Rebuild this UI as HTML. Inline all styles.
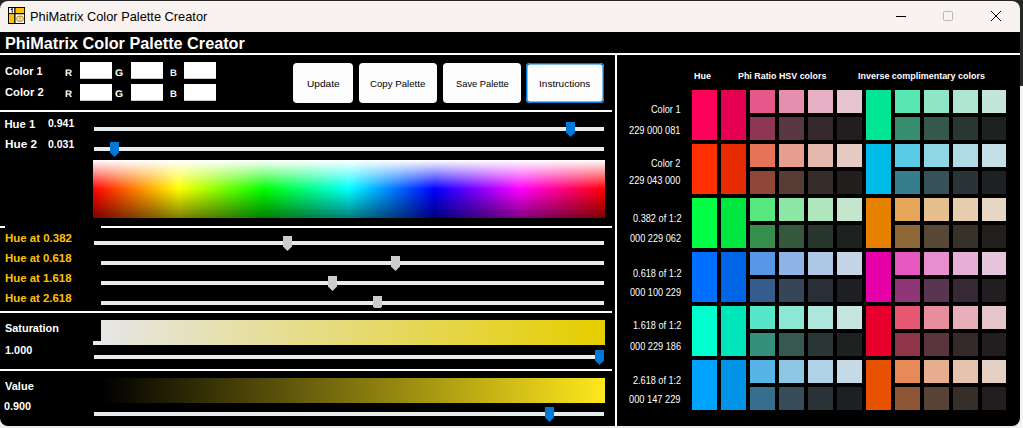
<!DOCTYPE html>
<html><head><meta charset="utf-8"><title>PhiMatrix Color Palette Creator</title>
<style>
html,body{margin:0;padding:0;}
body{width:1023px;height:428px;overflow:hidden;background:#f0f0f0;font-family:"Liberation Sans",sans-serif;position:relative;}
#out{position:absolute;left:0;top:0;width:1023px;height:428px;background:#ececec;overflow:hidden;}
#outtop{position:absolute;left:0;top:0;width:1023px;height:12px;background:#262626;}
#outright{position:absolute;left:1018px;top:0;width:5px;height:86px;background:#262626;}
#outright2{position:absolute;left:1018px;top:86px;width:5px;height:342px;background:#f4f4f4;}
#win{position:absolute;left:0;top:1px;width:1020px;height:425px;background:#000;border-radius:8px;overflow:hidden;}
#tb{position:absolute;left:0;top:0;width:1020px;height:31px;background:#f8f2f0;}
.a{position:absolute;}
.w{position:absolute;background:#fff;}
.inp{position:absolute;width:32px;height:17px;background:#fff;box-shadow:inset 0 -1px 0 #c8c8c8;}
.btn{position:absolute;top:62px;height:40px;background:#fdfdfd;border-radius:4px;}
.trk{position:absolute;height:4px;background:#e8ebec;}
.th{position:absolute;width:9px;height:15px;}
.c{position:absolute;width:25px;}
#txt{position:absolute;left:0;top:0;width:1023px;height:428px;overflow:hidden;}
.gp{text-rendering:geometricPrecision;}
.x{position:absolute;white-space:nowrap;line-height:1.2;transform-origin:0 0;}
</style></head><body>
<div id="out"><div id="outtop"></div><div id="outright"></div><div id="outright2"></div></div>
<div id="win">
<div id="tb">
<svg class="a" style="left:8px;top:6px" width="17" height="17" viewBox="0 0 17 17"><rect x="0" y="0" width="17" height="17" fill="#000"/><rect x="1" y="1" width="5.2" height="5.1" fill="#fff"/><rect x="7.5" y="1" width="8.6" height="5.1" fill="#ffc400"/><rect x="1" y="7.1" width="5.2" height="8.9" fill="#ffc400"/><rect x="7.5" y="7.3" width="8.6" height="8.7" fill="#fff"/><ellipse cx="12" cy="11.8" rx="3.3" ry="2.7" fill="#f6edc4" stroke="#c4a02c" stroke-width="1.1"/><path d="M12 9.2V14.4" stroke="#c4a02c" stroke-width="0.9"/><path d="M2.7 2.6L4.2 1.8V5.8" stroke="#333" stroke-width="1.2" fill="none"/></svg>
<svg class="a" style="left:890px;top:5px" width="120" height="22" viewBox="0 0 120 22"><path d="M6 10.5H16" stroke="#000" stroke-width="1.1"/><rect x="53.5" y="5.5" width="9" height="9" rx="1" fill="none" stroke="#bcb8b6" stroke-width="1"/><path d="M101 5L111 15M111 5L101 15" stroke="#000" stroke-width="1"/></svg>
</div>
<div class="w" style="left:0;top:52px;width:1020px;height:2px"></div>

<div class="inp" style="left:80px;top:61px"></div><div class="inp" style="left:131px;top:61px"></div><div class="inp" style="left:184px;top:61px"></div>
<div class="inp" style="left:80px;top:83px"></div><div class="inp" style="left:131px;top:83px"></div><div class="inp" style="left:184px;top:83px"></div>

<div class="btn" style="left:293px;width:60px"></div>
<div class="btn" style="left:359px;width:78px"></div>
<div class="btn" style="left:443px;width:78px"></div>
<div class="btn" style="left:526px;width:78px"></div><svg class="a" style="left:526px;top:62px" width="78" height="40" viewBox="0 0 78 40"><rect x="0.75" y="0.75" width="76.5" height="38.5" rx="3.5" fill="none" stroke="#0078d7" stroke-width="1.5"/></svg>

<div class="w" style="left:0;top:109px;width:612px;height:2px"></div>
<div class="w" style="left:615px;top:54px;width:2px;height:371px"></div>

<div class="trk" style="left:94px;top:126px;width:510px"></div>
<div class="trk" style="left:94px;top:146px;width:510px"></div>
<svg class="th" style="left:566px;top:121px" viewBox="0 0 9 15"><path d="M0 0H9V10.5L4.5 15L0 10.5Z" fill="#0078d7"/></svg>
<svg class="th" style="left:110px;top:141px" viewBox="0 0 9 15"><path d="M0 0H9V10.5L4.5 15L0 10.5Z" fill="#0078d7"/></svg>

<div class="a" style="left:93px;top:159px;width:512px;height:58px;background:linear-gradient(to bottom,rgba(255,255,255,1) 0%,rgba(255,255,255,0) 50%,rgba(0,0,0,0) 50%,rgba(0,0,0,0.5) 100%),linear-gradient(to right,#f00 0%,#ff0 16.667%,#0f0 33.333%,#0ff 50%,#00f 66.667%,#f0f 83.333%,#f00 100%)"></div>

<div class="w" style="left:0;top:225px;width:5px;height:2px"></div>
<div class="w" style="left:101px;top:225px;width:511px;height:2px"></div>

<div class="trk" style="left:94px;top:240px;width:510px"></div>
<div class="trk" style="left:101px;top:260px;width:503px"></div>
<div class="trk" style="left:101px;top:280px;width:503px"></div>
<div class="trk" style="left:101px;top:300px;width:503px"></div>
<svg class="th" style="left:283px;top:235px" viewBox="0 0 9 15"><path d="M0 0H9V10.5L4.5 15L0 10.5Z" fill="#cccccc"/></svg>
<svg class="th" style="left:391px;top:255px" viewBox="0 0 9 15"><path d="M0 0H9V10.5L4.5 15L0 10.5Z" fill="#cccccc"/></svg>
<svg class="th" style="left:328px;top:275px" viewBox="0 0 9 15"><path d="M0 0H9V10.5L4.5 15L0 10.5Z" fill="#cccccc"/></svg>
<svg class="th" style="left:373px;top:295px;height:12px" viewBox="0 0 9 12"><path d="M0 0H9V10.5L4.5 15L0 10.5Z" fill="#cccccc"/></svg>

<div class="w" style="left:0;top:310px;width:612px;height:2px"></div>

<div class="trk" style="left:93px;top:340px;width:20px;height:4px"></div>
<div class="a" style="left:101px;top:319px;width:504px;height:25px;background:linear-gradient(to right,#e6e6e6,#e5ce00)"></div>
<div class="trk" style="left:94px;top:354px;width:510px"></div>
<svg class="th" style="left:595px;top:349px" viewBox="0 0 9 15"><path d="M0 0H9V10.5L4.5 15L0 10.5Z" fill="#0078d7"/></svg>

<div class="w" style="left:0;top:368px;width:612px;height:2px"></div>

<div class="a" style="left:101px;top:377px;width:504px;height:25px;background:linear-gradient(to right,#000,#ffe81c)"></div>
<div class="trk" style="left:94px;top:411px;width:510px"></div>
<svg class="th" style="left:545px;top:406px" viewBox="0 0 9 15"><path d="M0 0H9V10.5L4.5 15L0 10.5Z" fill="#0078d7"/></svg>

<div id="grid" class="a" style="left:0;top:-1px;width:1020px;height:426px">
<div class="c" style="left:692px;top:90px;height:50px;background:#ff005a"></div>
<div class="c" style="left:721px;top:90px;height:50px;background:#e60051"></div>
<div class="c" style="left:750px;top:90px;height:23px;background:#e6588a"></div>
<div class="c" style="left:750px;top:117px;height:23px;background:#8e3655"></div>
<div class="c" style="left:779px;top:90px;height:23px;background:#e68ead"></div>
<div class="c" style="left:779px;top:117px;height:23px;background:#583642"></div>
<div class="c" style="left:808px;top:90px;height:23px;background:#e6afc3"></div>
<div class="c" style="left:808px;top:117px;height:23px;background:#36292e"></div>
<div class="c" style="left:837px;top:90px;height:23px;background:#e6c4d0"></div>
<div class="c" style="left:837px;top:117px;height:23px;background:#221d1e"></div>
<div class="c" style="left:866px;top:90px;height:50px;background:#00e694"></div>
<div class="c" style="left:895px;top:90px;height:23px;background:#58e6b3"></div>
<div class="c" style="left:895px;top:117px;height:23px;background:#368e6f"></div>
<div class="c" style="left:924px;top:90px;height:23px;background:#8ee6c6"></div>
<div class="c" style="left:924px;top:117px;height:23px;background:#36584c"></div>
<div class="c" style="left:953px;top:90px;height:23px;background:#afe6d2"></div>
<div class="c" style="left:953px;top:117px;height:23px;background:#293632"></div>
<div class="c" style="left:982px;top:90px;height:23px;width:24px;background:#c4e6da"></div>
<div class="c" style="left:982px;top:117px;height:23px;width:24px;background:#1d2220"></div>
<div class="c" style="left:692px;top:144px;height:50px;background:#ff2f00"></div>
<div class="c" style="left:721px;top:144px;height:50px;background:#e62b00"></div>
<div class="c" style="left:750px;top:144px;height:23px;background:#e67258"></div>
<div class="c" style="left:750px;top:171px;height:23px;background:#8e4636"></div>
<div class="c" style="left:779px;top:144px;height:23px;background:#e69e8e"></div>
<div class="c" style="left:779px;top:171px;height:23px;background:#583c36"></div>
<div class="c" style="left:808px;top:144px;height:23px;background:#e6b9af"></div>
<div class="c" style="left:808px;top:171px;height:23px;background:#362c29"></div>
<div class="c" style="left:837px;top:144px;height:23px;background:#e6cac4"></div>
<div class="c" style="left:837px;top:171px;height:23px;background:#221e1d"></div>
<div class="c" style="left:866px;top:144px;height:50px;background:#00bbe6"></div>
<div class="c" style="left:895px;top:144px;height:23px;background:#58cbe6"></div>
<div class="c" style="left:895px;top:171px;height:23px;background:#367e8e"></div>
<div class="c" style="left:924px;top:144px;height:23px;background:#8ed5e6"></div>
<div class="c" style="left:924px;top:171px;height:23px;background:#365158"></div>
<div class="c" style="left:953px;top:144px;height:23px;background:#afdbe6"></div>
<div class="c" style="left:953px;top:171px;height:23px;background:#293436"></div>
<div class="c" style="left:982px;top:144px;height:23px;width:24px;background:#c4dfe6"></div>
<div class="c" style="left:982px;top:171px;height:23px;width:24px;background:#1d2122"></div>
<div class="c" style="left:692px;top:198px;height:50px;background:#00ff45"></div>
<div class="c" style="left:721px;top:198px;height:50px;background:#00e63e"></div>
<div class="c" style="left:750px;top:198px;height:23px;background:#58e67e"></div>
<div class="c" style="left:750px;top:225px;height:23px;background:#368e4e"></div>
<div class="c" style="left:779px;top:198px;height:23px;background:#8ee6a6"></div>
<div class="c" style="left:779px;top:225px;height:23px;background:#36583f"></div>
<div class="c" style="left:808px;top:198px;height:23px;background:#afe6be"></div>
<div class="c" style="left:808px;top:225px;height:23px;background:#29362d"></div>
<div class="c" style="left:837px;top:198px;height:23px;background:#c4e6cd"></div>
<div class="c" style="left:837px;top:225px;height:23px;background:#1d221e"></div>
<div class="c" style="left:866px;top:198px;height:50px;background:#e68100"></div>
<div class="c" style="left:895px;top:198px;height:23px;background:#e6a858"></div>
<div class="c" style="left:895px;top:225px;height:23px;background:#8e6836"></div>
<div class="c" style="left:924px;top:198px;height:23px;background:#e6bf8e"></div>
<div class="c" style="left:924px;top:225px;height:23px;background:#584936"></div>
<div class="c" style="left:953px;top:198px;height:23px;background:#e6ceaf"></div>
<div class="c" style="left:953px;top:225px;height:23px;background:#363129"></div>
<div class="c" style="left:982px;top:198px;height:23px;width:24px;background:#e6d7c4"></div>
<div class="c" style="left:982px;top:225px;height:23px;width:24px;background:#221f1d"></div>
<div class="c" style="left:692px;top:252px;height:50px;background:#006fff"></div>
<div class="c" style="left:721px;top:252px;height:50px;background:#0064e6"></div>
<div class="c" style="left:750px;top:252px;height:23px;background:#5896e6"></div>
<div class="c" style="left:750px;top:279px;height:23px;background:#365c8e"></div>
<div class="c" style="left:779px;top:252px;height:23px;background:#8eb4e6"></div>
<div class="c" style="left:779px;top:279px;height:23px;background:#364558"></div>
<div class="c" style="left:808px;top:252px;height:23px;background:#afc7e6"></div>
<div class="c" style="left:808px;top:279px;height:23px;background:#292f36"></div>
<div class="c" style="left:837px;top:252px;height:23px;background:#c4d3e6"></div>
<div class="c" style="left:837px;top:279px;height:23px;background:#1d1f22"></div>
<div class="c" style="left:866px;top:252px;height:50px;background:#e600a7"></div>
<div class="c" style="left:895px;top:252px;height:23px;background:#e658bf"></div>
<div class="c" style="left:895px;top:279px;height:23px;background:#8e3676"></div>
<div class="c" style="left:924px;top:252px;height:23px;background:#e68ece"></div>
<div class="c" style="left:924px;top:279px;height:23px;background:#58364f"></div>
<div class="c" style="left:953px;top:252px;height:23px;background:#e6afd7"></div>
<div class="c" style="left:953px;top:279px;height:23px;background:#362933"></div>
<div class="c" style="left:982px;top:252px;height:23px;width:24px;background:#e6c4dc"></div>
<div class="c" style="left:982px;top:279px;height:23px;width:24px;background:#221d20"></div>
<div class="c" style="left:692px;top:306px;height:50px;background:#00ffcf"></div>
<div class="c" style="left:721px;top:306px;height:50px;background:#00e6ba"></div>
<div class="c" style="left:750px;top:306px;height:23px;background:#58e6cb"></div>
<div class="c" style="left:750px;top:333px;height:23px;background:#368e7d"></div>
<div class="c" style="left:779px;top:306px;height:23px;background:#8ee6d5"></div>
<div class="c" style="left:779px;top:333px;height:23px;background:#365851"></div>
<div class="c" style="left:808px;top:306px;height:23px;background:#afe6db"></div>
<div class="c" style="left:808px;top:333px;height:23px;background:#293634"></div>
<div class="c" style="left:837px;top:306px;height:23px;background:#c4e6df"></div>
<div class="c" style="left:837px;top:333px;height:23px;background:#1d2221"></div>
<div class="c" style="left:866px;top:306px;height:50px;background:#e6002b"></div>
<div class="c" style="left:895px;top:306px;height:23px;background:#e65872"></div>
<div class="c" style="left:895px;top:333px;height:23px;background:#8e3647"></div>
<div class="c" style="left:924px;top:306px;height:23px;background:#e68e9e"></div>
<div class="c" style="left:924px;top:333px;height:23px;background:#58363c"></div>
<div class="c" style="left:953px;top:306px;height:23px;background:#e6afba"></div>
<div class="c" style="left:953px;top:333px;height:23px;background:#36292c"></div>
<div class="c" style="left:982px;top:306px;height:23px;width:24px;background:#e6c4ca"></div>
<div class="c" style="left:982px;top:333px;height:23px;width:24px;background:#221d1e"></div>
<div class="c" style="left:692px;top:360px;height:50px;background:#00a4ff"></div>
<div class="c" style="left:721px;top:360px;height:50px;background:#0093e6"></div>
<div class="c" style="left:750px;top:360px;height:23px;background:#58b3e6"></div>
<div class="c" style="left:750px;top:387px;height:23px;background:#366e8e"></div>
<div class="c" style="left:779px;top:360px;height:23px;background:#8ec6e6"></div>
<div class="c" style="left:779px;top:387px;height:23px;background:#364c58"></div>
<div class="c" style="left:808px;top:360px;height:23px;background:#afd2e6"></div>
<div class="c" style="left:808px;top:387px;height:23px;background:#293236"></div>
<div class="c" style="left:837px;top:360px;height:23px;background:#c4dae6"></div>
<div class="c" style="left:837px;top:387px;height:23px;background:#1d2022"></div>
<div class="c" style="left:866px;top:360px;height:50px;background:#e65200"></div>
<div class="c" style="left:895px;top:360px;height:23px;background:#e68a58"></div>
<div class="c" style="left:895px;top:387px;height:23px;background:#8e5636"></div>
<div class="c" style="left:924px;top:360px;height:23px;background:#e6ad8e"></div>
<div class="c" style="left:924px;top:387px;height:23px;background:#584236"></div>
<div class="c" style="left:953px;top:360px;height:23px;background:#e6c3af"></div>
<div class="c" style="left:953px;top:387px;height:23px;background:#362e29"></div>
<div class="c" style="left:982px;top:360px;height:23px;width:24px;background:#e6d0c4"></div>
<div class="c" style="left:982px;top:387px;height:23px;width:24px;background:#221e1d"></div>
</div>
</div>
<div id="txt">
<div class="x" style="left:29.96px;top:10.34px;font-size:12.2px;font-weight:normal;color:#000;transform:scale(1.0513,1)">PhiMatrix Color Palette Creator</div>
<div class="x" style="left:5.20px;top:34.00px;font-size:16px;font-weight:bold;color:#fff;transform:scale(1.0140,1)">PhiMatrix Color Palette Creator</div>
<div class="x" style="left:4.56px;top:64.80px;font-size:11.3px;font-weight:bold;color:#fff;transform:scale(0.9660,1)">Color 1</div>
<div class="x" style="left:4.56px;top:85.80px;font-size:11.3px;font-weight:bold;color:#fff;transform:scale(0.9948,1)">Color 2</div>
<div class="x gp" style="left:64.82px;top:67.57px;font-size:9.5px;font-weight:bold;color:#fff;transform:scale(1.0283,1)">R</div>
<div class="x gp" style="left:115.37px;top:67.96px;font-size:9.5px;font-weight:bold;color:#fff;transform:scale(1.1051,1)">G</div>
<div class="x gp" style="left:170.18px;top:67.57px;font-size:9.5px;font-weight:bold;color:#fff;transform:scale(1.0068,1)">B</div>
<div class="x gp" style="left:64.82px;top:88.57px;font-size:9.5px;font-weight:bold;color:#fff;transform:scale(1.0283,1)">R</div>
<div class="x gp" style="left:115.37px;top:88.96px;font-size:9.5px;font-weight:bold;color:#fff;transform:scale(1.1051,1)">G</div>
<div class="x gp" style="left:170.18px;top:88.57px;font-size:9.5px;font-weight:bold;color:#fff;transform:scale(1.0068,1)">B</div>
<div class="x" style="left:4.44px;top:117.80px;font-size:11.3px;font-weight:bold;color:#fff;transform:scale(1.0000,1)">Hue 1</div>
<div class="x" style="left:47.56px;top:116.80px;font-size:11.3px;font-weight:bold;color:#fff;transform:scale(0.9286,1)">0.941</div>
<div class="x" style="left:4.99px;top:137.80px;font-size:11.3px;font-weight:bold;color:#fff;transform:scale(1.0404,1)">Hue 2</div>
<div class="x" style="left:47.56px;top:137.80px;font-size:11.3px;font-weight:bold;color:#fff;transform:scale(0.9286,1)">0.031</div>
<div class="x" style="left:4.66px;top:231.80px;font-size:11.3px;font-weight:bold;color:#ffc000;transform:scale(1.0154,1)">Hue at 0.382</div>
<div class="x" style="left:4.66px;top:251.80px;font-size:11.3px;font-weight:bold;color:#ffc000;transform:scale(1.0087,1)">Hue at 0.618</div>
<div class="x" style="left:4.66px;top:271.80px;font-size:11.3px;font-weight:bold;color:#ffc000;transform:scale(1.0087,1)">Hue at 1.618</div>
<div class="x" style="left:4.66px;top:291.80px;font-size:11.3px;font-weight:bold;color:#ffc000;transform:scale(1.0087,1)">Hue at 2.618</div>
<div class="x" style="left:4.86px;top:322.18px;font-size:11.3px;font-weight:bold;color:#fff;transform:scale(0.9651,1)">Saturation</div>
<div class="x" style="left:4.98px;top:343.82px;font-size:11.3px;font-weight:bold;color:#fff;transform:scale(0.9664,1)">1.000</div>
<div class="x" style="left:5.00px;top:379.82px;font-size:11.3px;font-weight:bold;color:#fff;transform:scale(0.9752,1)">Value</div>
<div class="x" style="left:4.40px;top:400.14px;font-size:11.3px;font-weight:bold;color:#fff;transform:scale(0.9590,1)">0.900</div>
<div class="x" style="left:306.65px;top:78.09px;font-size:9.8px;font-weight:normal;color:#000;transform:scale(1.0359,1)">Update</div>
<div class="x" style="left:369.56px;top:78.09px;font-size:9.8px;font-weight:normal;color:#000;transform:scale(0.9869,1)">Copy Palette</div>
<div class="x" style="left:455.59px;top:78.09px;font-size:9.8px;font-weight:normal;color:#000;transform:scale(0.9504,1)">Save Palette</div>
<div class="x" style="left:538.66px;top:78.09px;font-size:9.8px;font-weight:normal;color:#000;transform:scale(1.0255,1)">Instructions</div>
<div class="x" style="left:694.06px;top:70.16px;font-size:9.4px;font-weight:bold;color:#fff;transform:scale(0.9508,1)">Hue</div>
<div class="x" style="left:737.85px;top:70.16px;font-size:9.4px;font-weight:bold;color:#fff;transform:scale(0.9471,1)">Phi Ratio HSV colors</div>
<div class="x" style="left:858.24px;top:70.16px;font-size:9.4px;font-weight:bold;color:#fff;transform:scale(0.9555,1)">Inverse complimentary colors</div>
<div class="x" style="left:651.25px;top:103.25px;font-size:11px;font-weight:normal;color:#fff;transform:scale(0.8323,1)">Color 1</div>
<div class="x" style="left:629.21px;top:124.36px;font-size:11px;font-weight:normal;color:#fff;transform:scale(0.8416,1)">229 000 081</div>
<div class="x" style="left:651.22px;top:157.25px;font-size:11px;font-weight:normal;color:#fff;transform:scale(0.8268,1)">Color 2</div>
<div class="x" style="left:629.22px;top:174.36px;font-size:11px;font-weight:normal;color:#fff;transform:scale(0.8395,1)">229 043 000</div>
<div class="x" style="left:632.76px;top:211.67px;font-size:11px;font-weight:normal;color:#fff;transform:scale(0.8348,1)">0.382 of 1:2</div>
<div class="x" style="left:629.74px;top:232.37px;font-size:11px;font-weight:normal;color:#fff;transform:scale(0.8342,1)">000 229 062</div>
<div class="x" style="left:632.76px;top:266.66px;font-size:11px;font-weight:normal;color:#fff;transform:scale(0.8348,1)">0.618 of 1:2</div>
<div class="x" style="left:629.74px;top:286.37px;font-size:11px;font-weight:normal;color:#fff;transform:scale(0.8343,1)">000 100 229</div>
<div class="x" style="left:632.63px;top:319.44px;font-size:11px;font-weight:normal;color:#fff;transform:scale(0.8341,1)">1.618 of 1:2</div>
<div class="x" style="left:629.74px;top:340.37px;font-size:11px;font-weight:normal;color:#fff;transform:scale(0.8342,1)">000 229 186</div>
<div class="x" style="left:632.98px;top:374.44px;font-size:11px;font-weight:normal;color:#fff;transform:scale(0.8281,1)">2.618 of 1:2</div>
<div class="x" style="left:629.28px;top:393.36px;font-size:11px;font-weight:normal;color:#fff;transform:scale(0.8408,1)">000 147 229</div>
</div>
</body></html>
